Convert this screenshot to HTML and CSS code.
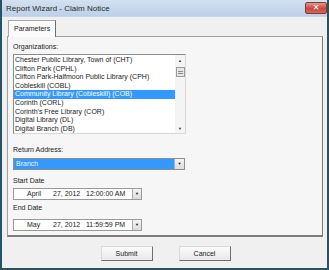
FILE: index.html
```html
<!DOCTYPE html>
<html lang="en">
<head>
    <meta charset="UTF-8">
    <title>Report Wizard - Claim Notice</title>
    <link rel="stylesheet" href="styles.css">
</head>
<body>
    <div class="window">
        <div class="titlebar">
            <span class="title">Report Wizard - Claim Notice</span>
            <button class="close-btn">&#x2715;</button>
        </div>

        <div class="main">
            <div class="tabs">
                <div class="tab">Parameters</div>
            </div>

            <div class="panel">
                <div class="label">Organizations:</div>
                <div class="listbox">
                    <ul class="items">
                        <li>Chester Public Library, Town of (CHT)</li>
                        <li>Clifton Park (CPHL)</li>
                        <li>Clifton Park-Halfmoon Public Library (CPH)</li>
                        <li>Cobleskill (COBL)</li>
                        <li class="selected">Community Library (Cobleskill) (COB)</li>
                        <li>Corinth (CORL)</li>
                        <li>Corinth's Free Library (COR)</li>
                        <li>Digital Library (DL)</li>
                        <li>Digital Branch (DB)</li>
                    </ul>
                    <div class="scrollbar">
                        <span class="arrow">&#9650;</span>
                        <span class="thumb"></span>
                        <span class="track"></span>
                        <span class="arrow">&#9660;</span>
                    </div>
                </div>

                <div class="label label-return">Return Address:</div>
                <div class="select">
                    <span class="select-value">Branch</span>
                    <span class="drop-btn">&#9660;</span>
                </div>

                <div class="label label-start">Start Date</div>
                <div class="datepicker">
                    <span class="month">April</span>
                    <span class="day">27, 2012</span>
                    <span class="time">12:00:00 AM</span>
                    <span class="drop-btn">&#9660;</span>
                </div>

                <div class="label label-end">End Date</div>
                <div class="datepicker datepicker-end">
                    <span class="month">May</span>
                    <span class="day">27, 2012</span>
                    <span class="time">11:59:59 PM</span>
                    <span class="drop-btn">&#9660;</span>
                </div>
            </div>

            <div class="actions">
                <button class="btn">Submit</button>
                <button class="btn">Cancel</button>
            </div>
        </div>
    </div>
</body>
</html>
```

FILE: styles.css
```css
/* General */
* {
    box-sizing: border-box;
    margin: 0;
    padding: 0;
}

body {
    font-family: 'Liberation Sans', Arial, sans-serif;
    font-size: 7px;
    color: #1a1a1a;
    background: #ffffff;
}

/* Window frame */
.window {
    width: 329px;
    height: 270px;
    display: flex;
    flex-direction: column;
    background-color: #f0f0f0;
    border: 2px solid #2a5263;
    border-top: none;
}

.titlebar {
    height: 17px;
    flex-shrink: 0;
    display: flex;
    align-items: center;
    justify-content: space-between;
    padding-left: 4px;
    background: linear-gradient(180deg, #d3e1f1 0%, #bcd0e8 100%);
    border-bottom: 1px solid #c8d6e6;
}

.title {
    font-size: 8px;
    color: #2a2a2a;
}

.close-btn {
    width: 22px;
    height: 12px;
    margin-top: -1px;
    border: 1px solid #8a3a36;
    border-radius: 2px;
    background: linear-gradient(180deg, #e6958c 0%, #c8493c 55%, #d0675b 100%);
    color: #ffffff;
    font-size: 8px;
    font-weight: bold;
    line-height: 10px;
    font-family: 'DejaVu Sans', sans-serif;
}

/* Main area */
.main {
    flex: 1;
    display: flex;
    flex-direction: column;
    padding: 3px 4px 0 5px;
}

.tabs {
    display: flex;
    padding-left: 1px;
}

.tab {
    height: 17px;
    line-height: 15px;
    padding: 0 5px 0 5px;
    background-color: #fbfbfb;
    border: 1px solid #a8a8a8;
    border-bottom: none;
    border-right: 1px solid #6f6f6f;
    margin-bottom: -1px;
    position: relative;
    z-index: 1;
}

.panel {
    height: 201px;
    background-color: #f6f6f6;
    border: 1px solid #a0a0a0;
    border-right-color: #7a7a7a;
    border-bottom: 2px solid #7d7d7d;
    padding: 5px 0 0 5px;
}

.label {
    height: 9px;
    line-height: 9px;
}

/* List box */
.listbox {
    width: 173px;
    height: 80px;
    margin-top: 3px;
    display: flex;
    background: #ffffff;
    border: 1px solid #8c8c8c;
    border-right-color: #d8d8d8;
    border-bottom-color: #d8d8d8;
}

.items {
    list-style: none;
    flex: 1;
    padding-top: 1px;
}

.items li {
    height: 8.6px;
    line-height: 8.6px;
    padding-left: 1px;
    white-space: nowrap;
}

.items li.selected {
    background-color: #3399ff;
    color: #ffffff;
}

.scrollbar {
    width: 10px;
    display: flex;
    flex-direction: column;
    align-items: center;
    background: #f4f4f4;
    padding: 3px 0 2px;
}

.scrollbar .arrow {
    font-size: 4px;
    line-height: 5px;
    color: #333;
}

.scrollbar .thumb {
    width: 9px;
    height: 10px;
    margin-top: 4px;
    border: 1px solid #9a9a9a;
    background: repeating-linear-gradient(180deg, #e6e6e6 0, #e6e6e6 1px, #8a8a8a 1px, #8a8a8a 2px) center / 5px 5px no-repeat, #e6e6e6;
}

.scrollbar .track {
    flex: 1;
}

/* Combo and date controls */
.label-return {
    margin-top: 11px;
}

.select {
    width: 172px;
    height: 12px;
    margin-top: 4px;
    display: flex;
    border: 1px solid #8e8e8e;
    background: #ffffff;
}

.select-value {
    flex: 1;
    background-color: #3399ff;
    color: #eaf4ff;
    line-height: 10px;
    padding-left: 2px;
}

.drop-btn {
    width: 10px;
    font-size: 4px;
    line-height: 10px;
    text-align: center;
    color: #111;
    background: linear-gradient(180deg, #f4f4f4, #dcdcdc);
    border-left: 1px solid #b0b0b0;
}

.label-start {
    margin-top: 6px;
}

.datepicker {
    width: 129px;
    height: 12px;
    margin-top: 3px;
    display: flex;
    align-items: center;
    background: #ffffff;
    border: 1px solid #9a9a9a;
    line-height: 10px;
}

.datepicker .month {
    width: 39px;
    padding-left: 13px;
}

.datepicker .day {
    width: 33px;
}

.datepicker .time {
    flex: 1;
}

.datepicker .drop-btn {
    height: 100%;
    width: 9px;
}

.label-end {
    margin-top: 3px;
}

.datepicker-end {
    margin-top: 7px;
}

/* Dialog buttons */
.actions {
    display: flex;
    justify-content: center;
    gap: 26px;
    padding-top: 9px;
    padding-left: 1px;
}

.btn {
    width: 52px;
    height: 15px;
    font-family: 'Liberation Sans', Arial, sans-serif;
    font-size: 7px;
    color: #1a1a1a;
    background: linear-gradient(180deg, #fbfbfb, #e8e8e8);
    border: 1px solid #dadada;
    border-right: 1px solid #6e6e6e;
    border-bottom: 1px solid #6e6e6e;
}
```
